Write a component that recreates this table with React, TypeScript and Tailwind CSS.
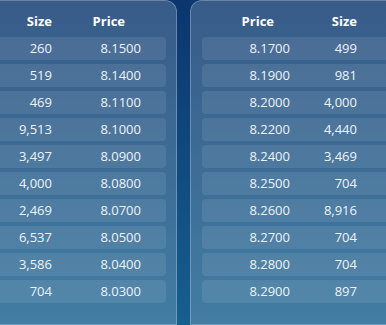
const bids: [string, string][] = [
  ["260", "8.1500"],
  ["519", "8.1400"],
  ["469", "8.1100"],
  ["9,513", "8.1000"],
  ["3,497", "8.0900"],
  ["4,000", "8.0800"],
  ["2,469", "8.0700"],
  ["6,537", "8.0500"],
  ["3,586", "8.0400"],
  ["704", "8.0300"],
];

const asks: [string, string][] = [
  ["8.1700", "499"],
  ["8.1900", "981"],
  ["8.2000", "4,000"],
  ["8.2200", "4,440"],
  ["8.2400", "3,469"],
  ["8.2500", "704"],
  ["8.2600", "8,916"],
  ["8.2700", "704"],
  ["8.2800", "704"],
  ["8.2900", "897"],
];

export default function App() {
  return (
    <div className="flex h-[325px] w-[386px] gap-[13px] overflow-hidden bg-gradient-to-b from-[#0b366e] to-[#175f8e] font-['Open_Sans',sans-serif] text-[13px] text-[#eef3f8]">
      <div className="ml-[-43px] w-[220px] shrink-0 rounded-t-[12px] border border-white/25 bg-white/[0.19] pt-[9px] pr-[10px] pl-[10px]">
        <div className="mb-[3px] flex h-[24px] items-center font-bold text-white">
          <div className="w-[84px] text-right">Size</div>
          <div className="w-[73px] text-right">Price</div>
        </div>
        <div className="flex flex-col gap-[4px]">
          {bids.map(([size, price], i) => (
            <div key={i} className="flex h-[23px] items-center rounded-[4px] bg-white/[0.09]">
              <div className="w-[84px] text-right">{size}</div>
              <div className="w-[89px] text-right">{price}</div>
            </div>
          ))}
        </div>
      </div>
      <div className="w-[220px] shrink-0 rounded-t-[12px] border border-white/25 bg-white/[0.19] pt-[9px] pr-[10px] pl-[11px]">
        <div className="mb-[3px] flex h-[24px] items-center font-bold text-white">
          <div className="w-[72px] text-right">Price</div>
          <div className="w-[83px] text-right">Size</div>
        </div>
        <div className="flex flex-col gap-[4px]">
          {asks.map(([price, size], i) => (
            <div key={i} className="flex h-[23px] items-center rounded-[4px] bg-white/[0.09]">
              <div className="w-[88px] text-right">{price}</div>
              <div className="w-[67px] text-right">{size}</div>
            </div>
          ))}
        </div>
      </div>
    </div>
  );
}
